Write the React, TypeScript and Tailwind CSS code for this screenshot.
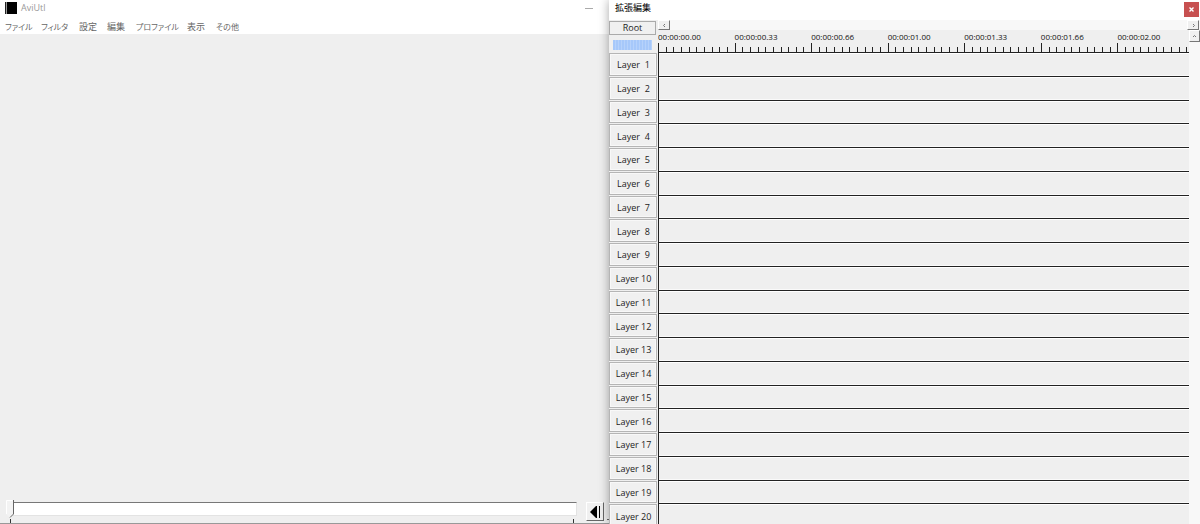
import React, { useState } from 'react'

const menus = [
  { label: 'ファイル', style: 'w-[36px] text-[8px]' },
  { label: 'フィルタ', style: 'w-[38px] text-[8px]' },
  { label: '設定', style: 'w-[28px] text-[9px]' },
  { label: '編集', style: 'w-[29px] text-[9px]' },
  { label: 'プロファイル', style: 'w-[51px] text-[8px]' },
  { label: '表示', style: 'w-[29px] text-[9px]' },
  { label: 'その他', style: 'w-[30px] text-[8px]' },
]

const times = ['00:00:00.00', '00:00:00.33', '00:00:00.66', '00:00:01.00', '00:00:01.33', '00:00:01.66', '00:00:02.00']
const ticks = Array.from({ length: 10 }, (_, i) => i)
const layers = Array.from({ length: 20 }, (_, i) => i + 1)

const ArrowButton: React.FC<{ label: string; d: string; size: string }> = function ({ label, d, size }) {
  return (
    <button aria-label={label} className={`${size} flex shrink-0 items-center justify-center border border-t-white border-l-white border-r-[#777] border-b-[#777] bg-[#f0f0f0]`}>
      <svg width="5" height="5" viewBox="0 0 5 5" fill="none" stroke="#777">
        <path d={d} />
      </svg>
    </button>
  )
}

const Seek: React.FC = function () {
  const [frame, setFrame] = useState(0)

  return (
    <div className="relative mr-[9px] h-full flex-grow">
      <input
        type="range"
        aria-label="Frame"
        min={0}
        max={100}
        value={frame}
        onChange={e => setFrame(Number(e.target.value))}
        className="mt-[2px] block h-[14px] w-full appearance-none border-t border-r border-b border-t-[#777] border-r-[#e3e3e3] border-b-[#e3e3e3] bg-white outline-none [&::-webkit-slider-thumb]:h-3 [&::-webkit-slider-thumb]:w-2 [&::-webkit-slider-thumb]:appearance-none"
      />
      <div className="flex justify-between pt-[3px] pr-[3px]">
        <span className="h-1 w-px bg-[#333]"></span>
        <span className="h-1 w-px bg-[#333]"></span>
      </div>
      <svg className="pointer-events-none absolute top-0 -ml-1" style={{ left: `${frame}%` }} width="8" height="18" viewBox="0 0 8 18">
        <path d="M0 0h8v14l-4 4-4-4z" fill="#f3f3f3" />
        <path d="M.5 14V.5h6" fill="none" stroke="#fff" />
        <path d="M7.500 0v14l-3.500 3.500" fill="none" stroke="#666" />
      </svg>
    </div>
  )
}

const Player: React.FC = function () {
  return (
    <section className="flex min-w-0 flex-col border-b border-[#999] bg-[#efefef]">
      <header className="h-[34px] bg-white">
        <div className="flex h-4 items-center pl-[5px]">
          <svg width="12" height="12" viewBox="0 0 12 12">
            <path d="M0 0h1v12H0z" fill="#222" />
            <path d="M1 0h1v12H1z" fill="#999" />
            <path d="M2 0h10v12H2z" fill="#000" />
          </svg>
          <h1 className="ml-1 text-[9px] leading-4 text-[#999]">AviUtl</h1>
          <button aria-label="Minimize" className="mr-4 ml-auto flex h-4 w-2 items-center">
            <span className="h-px w-full bg-[#aaa]"></span>
          </button>
        </div>
        <nav className="flex items-center pt-[3px] pl-[5px] leading-4 whitespace-nowrap text-[#666] [font-feature-settings:'palt']">
          {menus.map(menu => (
            <button key={menu.label} className={`${menu.style} shrink-0 text-left`}>{menu.label}</button>
          ))}
        </nav>
      </header>
      <div className="flex-grow"></div>
      <footer className="flex h-[23px] pl-[10px]">
        <Seek />
        <button aria-label="Previous frame" className="mt-[2px] mr-[3px] flex h-[19px] w-[18px] items-center justify-center border border-t-white border-l-white border-r-[#666] border-b-[#666] bg-[#f0f0f0]">
          <svg width="11" height="12" viewBox="0 0 11 12">
            <path d="M6 0v12L0 6z" />
            <path d="M6 0h1v12H6zM9 0h1v12H9z" />
          </svg>
        </button>
        <span className="h-5 w-[2px] border-b border-[#666]"></span>
      </footer>
    </section>
  )
}

const Timeline: React.FC = function () {
  return (
    <section className="relative flex min-w-0 flex-col bg-[#efefef] shadow-[0_0_10px_rgba(0,0,0,0.35)]">
      <header className="flex h-5 shrink-0 items-start justify-between bg-white pr-px pl-[6px]">
        <h2 className="text-[9px] leading-4 text-black">拡張編集</h2>
        <button aria-label="Close" className="mt-[2px] flex h-[15px] w-[15px] items-center justify-center bg-[#c75050]">
          <svg width="5" height="5" viewBox="0 0 5 5" stroke="#fff" strokeWidth="1.400">
            <path d="M.5.5l4 4M4.500.5l-4 4" />
          </svg>
        </button>
      </header>
      <div className="flex h-[33px] shrink-0">
        <div className="w-[49px] shrink-0 pt-px">
          <button className="block h-[14px] w-[47px] border border-[#aaa] bg-[#f0f0f0] text-center text-[9px] leading-3 text-[#222]">Root</button>
          <div className="mt-[5px] ml-1 h-[10px] w-[39px] bg-[repeating-linear-gradient(90deg,#a6c8fa_0_2px,#b6d2fb_2px_3px)]"></div>
        </div>
        <div className="min-w-0 flex-grow">
          <div className="flex h-[10px] justify-between bg-[#f8f8f8] pr-px">
            <ArrowButton label="Scroll left" d="M3 1L1.500 2.500 3 4" size="h-[10px] w-3" />
            <ArrowButton label="Scroll right" d="M2 1l1.500 1.500L2 4" size="h-[10px] w-3" />
          </div>
          <div className="flex h-[23px]">
            <div className="min-w-0 flex-grow overflow-hidden border-b border-[#222]">
              <div className="grid w-[536px] grid-cols-7">
                {times.map(time => (
                  <div key={time}>
                    <div className="h-[13px] text-[8px] leading-[13px] text-[#111]">{time}</div>
                    <div className="grid h-[9px] grid-cols-10 items-end">
                      {ticks.map(i => (
                        <span key={i} className={`border-l border-[#222] ${i === 0 ? 'h-[9px]' : 'h-[5px]'}`}></span>
                      ))}
                    </div>
                  </div>
                ))}
              </div>
            </div>
            <div className="w-[11px] shrink-0 bg-[#f8f8f8]">
              <ArrowButton label="Scroll up" d="M1 3l1.500-1.500L4 3" size="h-3 w-[11px]" />
            </div>
          </div>
        </div>
      </div>
      <div className="flex min-h-0 flex-grow overflow-hidden">
        <div className="grid h-[475px] flex-grow grid-rows-[repeat(20,minmax(0,1fr))]">
          {layers.map(n => (
            <div key={n} className="flex min-h-0">
              <button className="mr-px mb-px w-12 shrink-0 border border-[#b5b5b5] bg-[#f0f0f0] pt-[2px] pl-px text-center text-[9px] leading-4 whitespace-pre text-[#222] shadow-[inset_0_0_0_1px_#f8f8f8]">
                {n < 10 ? `Layer  ${n}` : `Layer ${n}`}
              </button>
              <div className="flex-grow border-b border-l border-[#222] shadow-[inset_0_1px_0_#fff,inset_0_-1px_0_#fafafa]"></div>
            </div>
          ))}
        </div>
        <div className="w-[11px] shrink-0 bg-[#f8f8f8]"></div>
      </div>
    </section>
  )
}

export default function App() {
  return (
    <main className="grid h-screen grid-cols-[609fr_591fr] grid-rows-[minmax(0,1fr)] overflow-hidden font-['Open_Sans','Noto_Sans_CJK_JP',sans-serif]">
      <Player />
      <Timeline />
    </main>
  )
}
